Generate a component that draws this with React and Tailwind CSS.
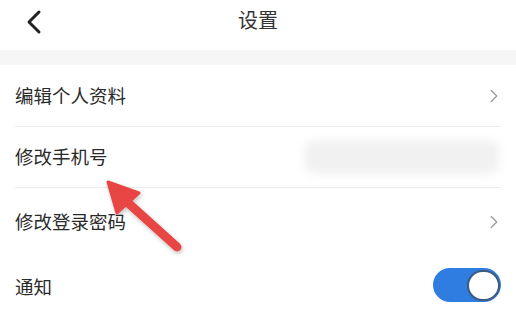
import { ChevronLeft, ChevronRight } from 'lucide-react'

function Row({ label, children, divider = true, h = 'h-[62px]' }) {
  return (
    <div className="px-[15px]">
      <div className={`${h} flex items-center justify-between ${divider ? 'border-b border-[#ececec]' : ''}`}>
        <span className="text-[18.5px] text-[#2a2a2a]">{label}</span>
        {children}
      </div>
    </div>
  )
}

export default function App() {
  return (
    <div className="relative w-[516px] h-[320px] bg-white overflow-hidden" style={{ fontFamily: '"Noto Sans CJK SC", "Noto Sans", sans-serif' }}>
      <div className="h-[50px] flex items-center relative">
        <ChevronLeft className="absolute left-[14px] top-[2px] w-[40px] h-[40px] text-[#222]" strokeWidth={1.8} />
        <div className="flex-1 text-center text-[20px] text-[#333] -mt-[10px]">设置</div>
      </div>
      <div className="h-[15px] bg-[#f6f6f6]" />
      <Row label="编辑个人资料">
        <ChevronRight className="w-[22px] h-[22px] text-[#999] -mr-[4px]" strokeWidth={1.4} />
      </Row>
      <Row label="修改手机号" h="h-[61px]">
        <div className="w-[195px] h-[34px] rounded-[10px] bg-[#f1f1f1] blur-[4px] mr-[2px]" />
      </Row>
      <Row label="修改登录密码" divider={false} h="h-[68px]">
        <ChevronRight className="w-[22px] h-[22px] text-[#999] -mr-[4px]" strokeWidth={1.4} />
      </Row>
      <Row label="通知" divider={false}>
        <div className="w-[68px] h-[34px] rounded-full bg-[#2f7de0] flex items-center justify-end pr-[1px] -mt-[4px]">
          <div className="w-[33px] h-[31px] rounded-full bg-white border-[2px] border-[#3d5a80]" />
        </div>
      </Row>
      <svg className="absolute left-0 top-0 pointer-events-none" width="516" height="320">
        <defs>
          <filter id="sh" x="-20%" y="-20%" width="140%" height="140%">
            <feDropShadow dx="1" dy="2" stdDeviation="2" floodColor="#000" floodOpacity="0.25" />
          </filter>
        </defs>
        <g filter="url(#sh)" fill="#e84444" stroke="#e84444" strokeLinejoin="round" strokeLinecap="round">
          <line x1="126" y1="201" x2="177" y2="247" strokeWidth="9" />
          <polygon points="108,182 139,193 117,213" strokeWidth="3" />
        </g>
      </svg>
    </div>
  )
}
